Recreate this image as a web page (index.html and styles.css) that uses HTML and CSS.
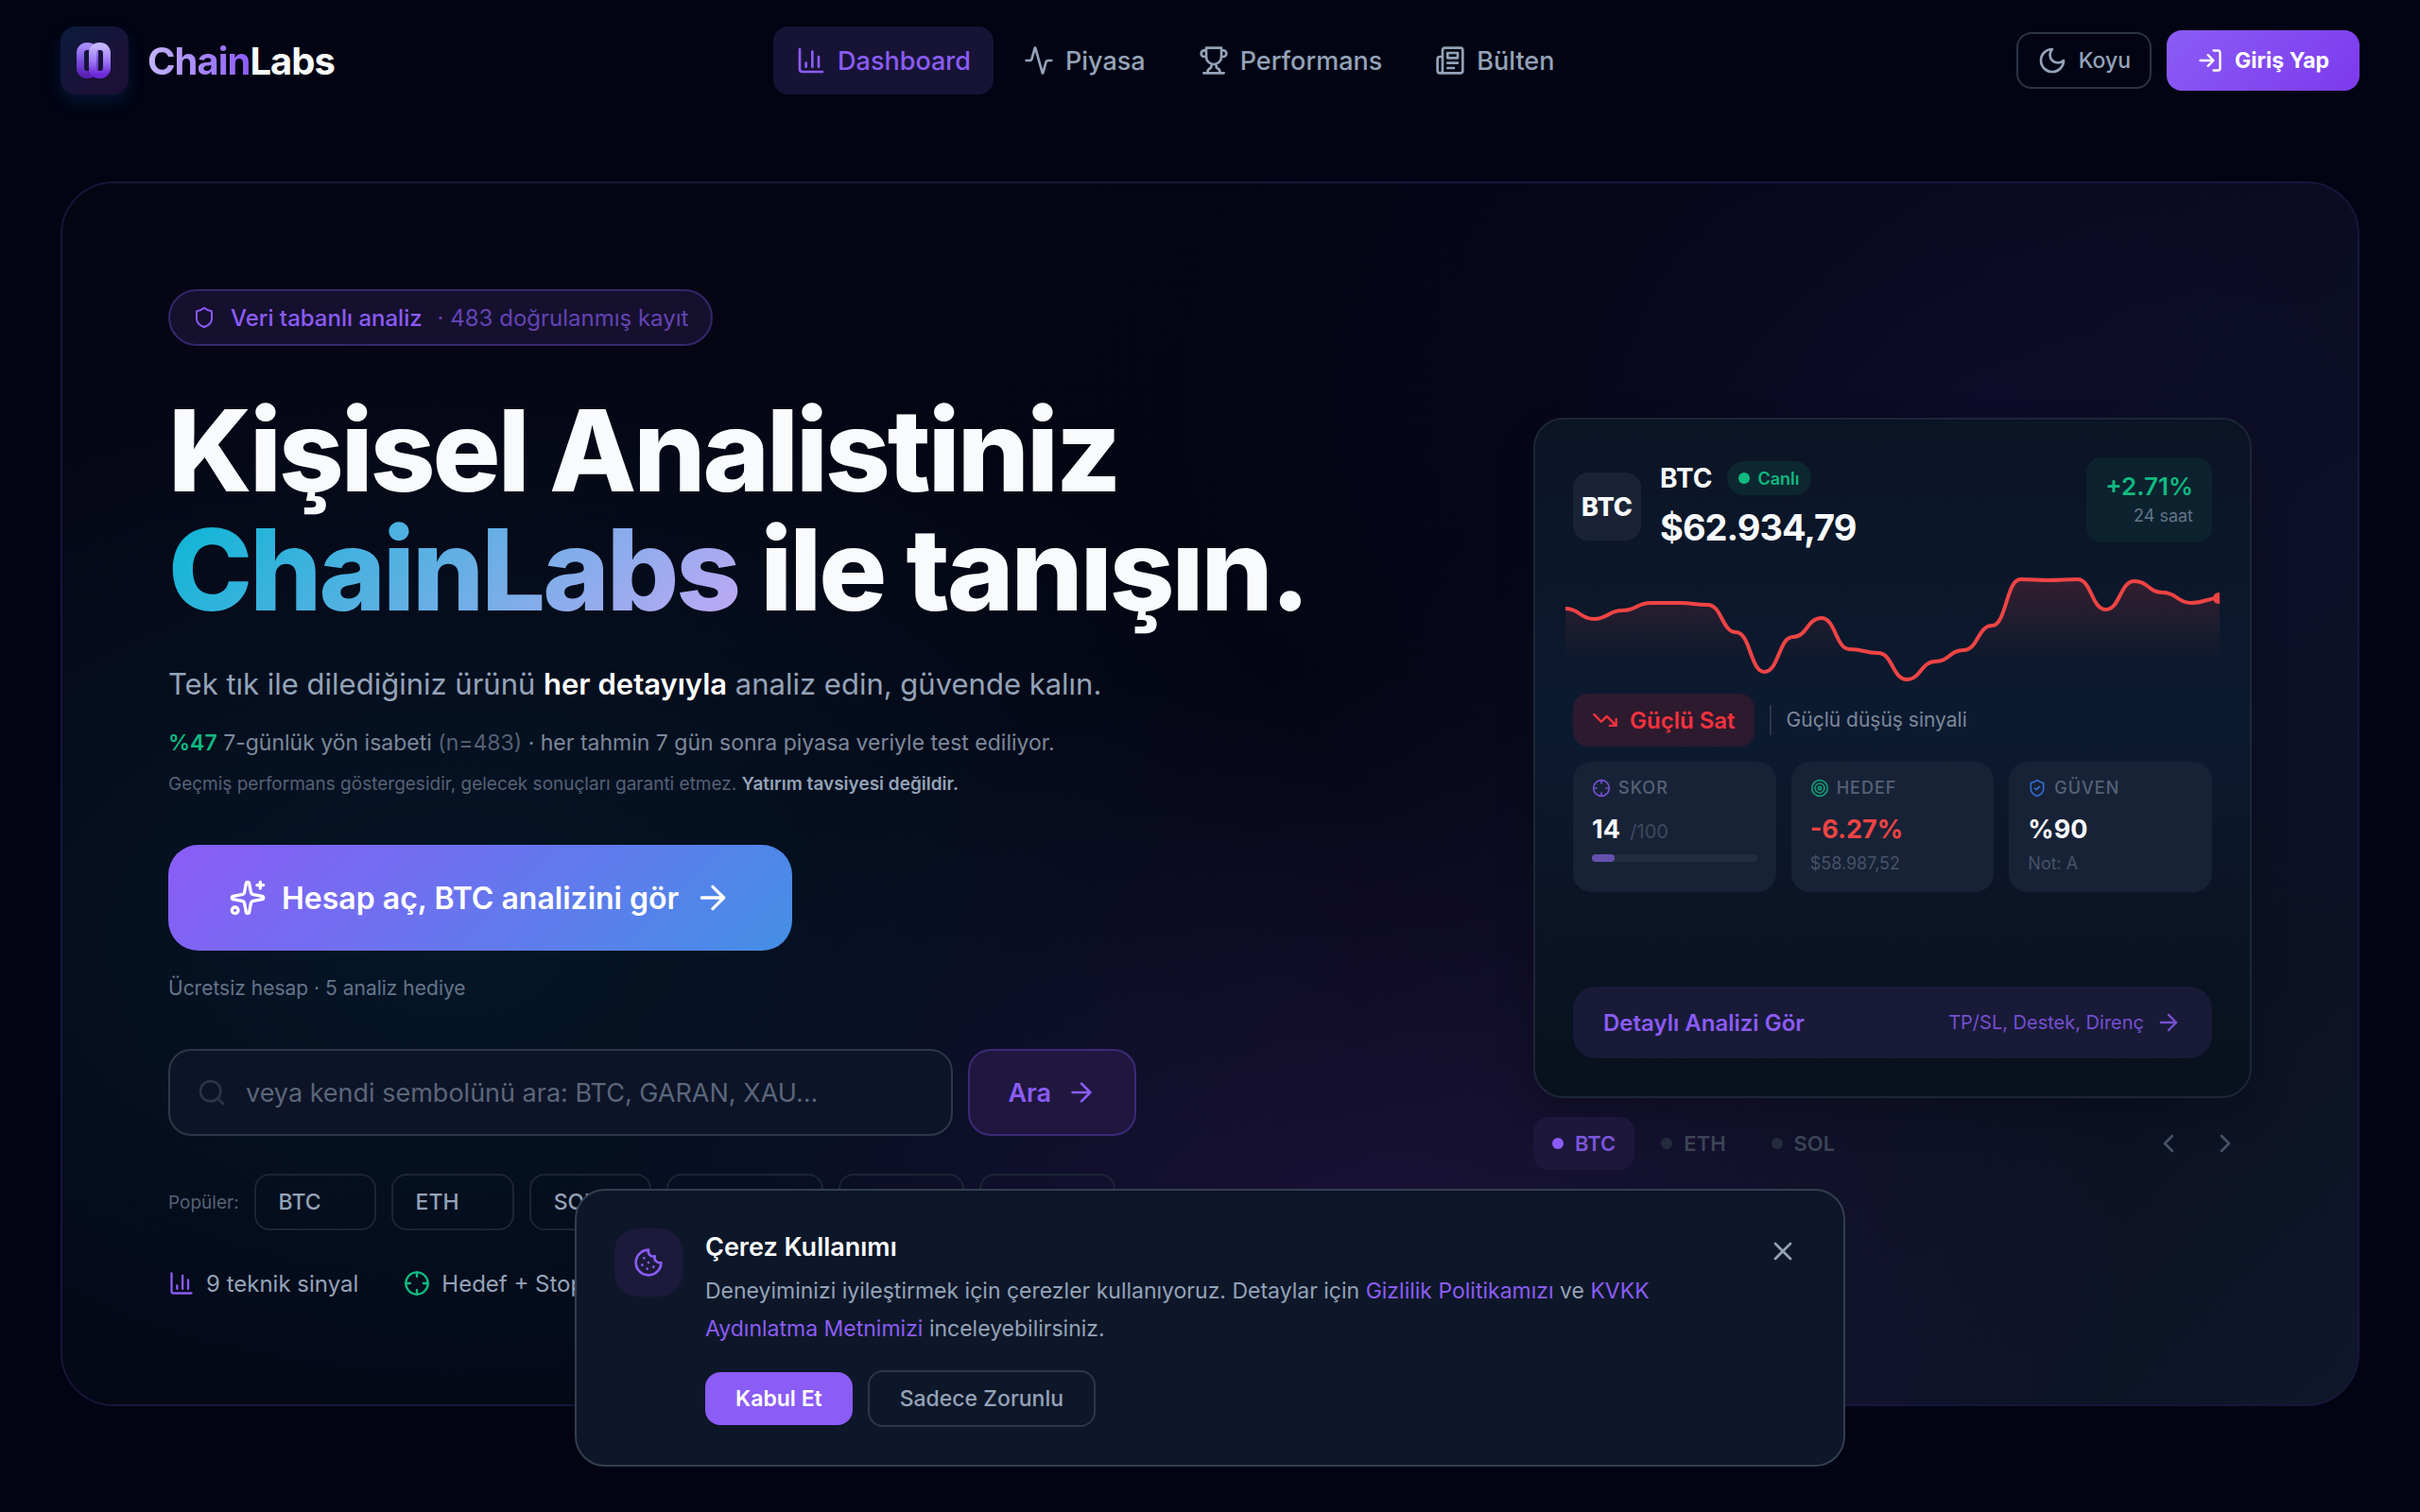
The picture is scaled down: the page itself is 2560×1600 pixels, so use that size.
FILE: index.html
```html
<!DOCTYPE html>
<html lang="tr">
<head>
  <meta charset="UTF-8">
  <meta name="viewport" content="width=device-width, initial-scale=1.0">
  <title>ChainLabs</title>
  <link rel="stylesheet" href="styles.css">
</head>
<body>
  <!-- shared icons -->
  <svg class="sprite" aria-hidden="true">
    <symbol id="i-chart" viewBox="0 0 24 24"><path d="M3 3v16a2 2 0 0 0 2 2h16M18 17V9M13 17V5M8 17v-3"/></symbol>
    <symbol id="i-arrow" viewBox="0 0 24 24"><path d="M5 12h14M12 5l7 7-7 7"/></symbol>
    <symbol id="i-cross" viewBox="0 0 24 24"><circle cx="12" cy="12" r="10"/><path d="M22 12h-4M6 12H2M12 6V2M12 22v-4"/></symbol>
  </svg>

  <header class="header">
    <a href="#" class="brand">
      <span class="brand-logo">
        <svg viewBox="0 0 40 40" fill="none" stroke-width="8">
          <defs>
            <linearGradient id="ringBack" x1="0" y1="0" x2="0" y2="1">
              <stop offset="0" stop-color="#a78bfa"/>
              <stop offset=".5" stop-color="#7c4fe0"/>
              <stop offset="1" stop-color="#5b21b6"/>
            </linearGradient>
            <linearGradient id="ringFront" x1="0" y1="0" x2="0" y2="1">
              <stop offset="0" stop-color="#c4b5fd"/>
              <stop offset=".5" stop-color="#9f7bf7"/>
              <stop offset="1" stop-color="#6d28d9"/>
            </linearGradient>
          </defs>
          <rect x="5" y="5" width="15" height="30" rx="7" stroke="url(#ringBack)"/>
          <rect x="18" y="5" width="15" height="30" rx="7" stroke="url(#ringFront)"/>
        </svg>
      </span>
      <span class="brand-name"><span>Chain</span>Labs</span>
    </a>

    <nav class="nav">
      <a href="#" class="nav-link active"><svg class="icon"><use href="#i-chart"/></svg>Dashboard</a>
      <a href="#" class="nav-link">
        <svg class="icon" viewBox="0 0 24 24"><path d="M22 12h-2.480a2 2 0 0 0-1.930 1.460l-2.350 8.360a.25.25 0 0 1-.48 0L9.240 2.180a.25.25 0 0 0-.48 0l-2.350 8.360A2 2 0 0 1 4.490 12H2"/></svg>Piyasa
      </a>
      <a href="#" class="nav-link">
        <svg class="icon" viewBox="0 0 24 24"><path d="M6 9H4.500a2.500 2.500 0 0 1 0-5H6M18 9h1.500a2.500 2.500 0 0 0 0-5H18M4 22h16M10 14.660V17c0 .55-.47.98-.97 1.210C7.850 18.750 7 20.240 7 22M14 14.660V17c0 .55.47.98.97 1.210C16.150 18.750 17 20.240 17 22M18 2H6v7a6 6 0 0 0 12 0V2Z"/></svg>Performans
      </a>
      <a href="#" class="nav-link">
        <svg class="icon" viewBox="0 0 24 24"><path d="M4 22h16a2 2 0 0 0 2-2V4a2 2 0 0 0-2-2H8a2 2 0 0 0-2 2v16a2 2 0 0 1-2 2Zm0 0a2 2 0 0 1-2-2v-9c0-1.100.9-2 2-2h2M18 14h-8M15 18h-5M10 6h8v4h-8z"/></svg>Bülten
      </a>
    </nav>

    <div class="header-actions">
      <button type="button" class="theme-btn">
        <svg class="icon" viewBox="0 0 24 24"><path d="M12 3a6 6 0 0 0 9 9 9 9 0 1 1-9-9Z"/></svg>Koyu
      </button>
      <button type="button" class="login-btn">
        <svg class="icon" viewBox="0 0 24 24"><path d="M15 3h4a2 2 0 0 1 2 2v14a2 2 0 0 1-2 2h-4M10 17l5-5-5-5M15 12H3"/></svg>Giriş Yap
      </button>
    </div>
  </header>

  <main class="hero">
    <section class="hero-text">
      <div class="badge">
        <svg class="icon" viewBox="0 0 24 24"><path d="M20 13c0 5-3.500 7.500-7.660 8.950a1 1 0 0 1-.67-.01C7.500 20.500 4 18 4 13V6a1 1 0 0 1 1-1c2 0 4.500-1.200 6.240-2.720a1.170 1.170 0 0 1 1.520 0C14.510 3.810 17 5 19 5a1 1 0 0 1 1 1z"/></svg>
        <strong>Veri tabanlı analiz</strong>
        <span>· 483 doğrulanmış kayıt</span>
      </div>

      <h1>Kişisel Analistiniz<br><span>ChainLabs</span> ile tanışın.</h1>

      <p class="lead">Tek tık ile dilediğiniz ürünü <strong>her detayıyla</strong> analiz edin, güvende kalın.</p>
      <p class="accuracy"><strong>%47</strong> 7-günlük yön isabeti <span>(n=483)</span> · her tahmin 7 gün sonra piyasa veriyle test ediliyor.</p>
      <p class="disclaimer">Geçmiş performans göstergesidir, gelecek sonuçları garanti etmez. <strong>Yatırım tavsiyesi değildir.</strong></p>

      <a href="#" class="cta">
        <svg class="icon" viewBox="0 0 24 24"><path d="M11.017 2.814a1 1 0 0 1 1.966 0l1.051 5.558a2 2 0 0 0 1.594 1.594l5.558 1.051a1 1 0 0 1 0 1.966l-5.558 1.051a2 2 0 0 0-1.594 1.594l-1.051 5.558a1 1 0 0 1-1.966 0l-1.051-5.558a2 2 0 0 0-1.594-1.594l-5.558-1.051a1 1 0 0 1 0-1.966l5.558-1.051a2 2 0 0 0 1.594-1.594zM20 2v4M22 4h-4"/><circle cx="4" cy="20" r="2"/></svg>
        Hesap aç, BTC analizini gör
        <svg class="icon arrow"><use href="#i-arrow"/></svg>
      </a>
      <p class="cta-note">Ücretsiz hesap · 5 analiz hediye</p>

      <form class="search">
        <div class="search-field">
          <svg class="icon" viewBox="0 0 24 24"><circle cx="11" cy="11" r="8"/><path d="m21 21-4.340-4.340"/></svg>
          <input type="text" aria-label="Sembol ara" placeholder="veya kendi sembolünü ara: BTC, GARAN, XAU...">
        </div>
        <button type="button" class="search-btn">Ara <svg class="icon"><use href="#i-arrow"/></svg></button>
      </form>

      <div class="popular">
        <span class="popular-label">Popüler:</span>
        <button type="button" class="chip">BTC</button>
        <button type="button" class="chip">ETH</button>
        <button type="button" class="chip">SOL</button>
        <button type="button" class="chip">GARAN</button>
        <button type="button" class="chip">XAU</button>
        <button type="button" class="chip">AAPL</button>
      </div>

      <ul class="features">
        <li><svg class="icon violet"><use href="#i-chart"/></svg>9 teknik sinyal</li>
        <li><svg class="icon green"><use href="#i-cross"/></svg>Hedef + Stop</li>
      </ul>
    </section>

    <section class="hero-preview">
      <article class="coin-card">
        <div class="coin-head">
          <div class="coin-logo">BTC</div>
          <div class="coin-info">
            <div class="coin-name">BTC <span class="live">Canlı</span></div>
            <div class="coin-price">$62.934,79</div>
          </div>
          <div class="change">
            <strong>+2.71%</strong>
            <span>24 saat</span>
          </div>
        </div>

        <svg class="chart" viewBox="0 0 690 128" preserveAspectRatio="none">
          <defs>
            <linearGradient id="chartFill" x1="0" y1="0" x2="0" y2="1">
              <stop offset="0" stop-color="#ef4444" stop-opacity=".18"/>
              <stop offset=".75" stop-color="#ef4444" stop-opacity="0"/>
            </linearGradient>
          </defs>
          <path class="chart-area" d="M0 44C15 44 15 55 30 55S45 46 60 46S75 38 90 38S105 38 120 38S135 40 150 40S165 69 180 69S195 111 210 111S225 74 240 74S255 54 270 54S285 87 300 87S315 91 330 91S345 119 360 119S375 100 390 100S405 88 420 88S435 62 450 62S465 13 480 13S495 14 510 14S525 13 540 13S555 45 570 45S585 15 600 15S615 27 630 27S645 38 660 38S675 33 690 33V128H0Z"/>
          <path class="chart-line" d="M0 44C15 44 15 55 30 55S45 46 60 46S75 38 90 38S105 38 120 38S135 40 150 40S165 69 180 69S195 111 210 111S225 74 240 74S255 54 270 54S285 87 300 87S315 91 330 91S345 119 360 119S375 100 390 100S405 88 420 88S435 62 450 62S465 13 480 13S495 14 510 14S525 13 540 13S555 45 570 45S585 15 600 15S615 27 630 27S645 38 660 38S675 33 690 33"/>
          <circle class="chart-dot" cx="689" cy="33" r="6"/>
        </svg>

        <div class="signal">
          <span class="signal-tag">
            <svg class="icon" viewBox="0 0 24 24"><path d="M16 17h6v-6M22 17l-8.500-8.500-5 5L2 7"/></svg>Güçlü Sat
          </span>
          <span class="signal-text">Güçlü düşüş sinyali</span>
        </div>

        <div class="stats">
          <div class="stat">
            <div class="stat-label"><svg class="icon violet"><use href="#i-cross"/></svg>SKOR</div>
            <div class="stat-value">14 <small>/100</small></div>
            <div class="meter"><div style="width: 14%"></div></div>
          </div>
          <div class="stat">
            <div class="stat-label"><svg class="icon green" viewBox="0 0 24 24"><circle cx="12" cy="12" r="10"/><circle cx="12" cy="12" r="6"/><circle cx="12" cy="12" r="2"/></svg>HEDEF</div>
            <div class="stat-value down">-6.27%</div>
            <div class="stat-sub">$58.987,52</div>
          </div>
          <div class="stat">
            <div class="stat-label"><svg class="icon blue" viewBox="0 0 24 24"><path d="M20 13c0 5-3.500 7.500-7.660 8.950a1 1 0 0 1-.67-.01C7.500 20.500 4 18 4 13V6a1 1 0 0 1 1-1c2 0 4.500-1.200 6.240-2.720a1.170 1.170 0 0 1 1.520 0C14.510 3.810 17 5 19 5a1 1 0 0 1 1 1zM9 12l2 2 4-4"/></svg>GÜVEN</div>
            <div class="stat-value">%90</div>
            <div class="stat-sub">Not: A</div>
          </div>
        </div>

        <a href="#" class="detail-link">
          <strong>Detaylı Analizi Gör</strong>
          <span>TP/SL, Destek, Direnç <svg class="icon"><use href="#i-arrow"/></svg></span>
        </a>
      </article>

      <div class="tabs">
        <button type="button" class="tab active">BTC</button>
        <button type="button" class="tab">ETH</button>
        <button type="button" class="tab">SOL</button>
        <div class="pager">
          <button type="button" aria-label="Önceki"><svg class="icon" viewBox="0 0 24 24"><path d="m15 18-6-6 6-6"/></svg></button>
          <button type="button" aria-label="Sonraki"><svg class="icon" viewBox="0 0 24 24"><path d="m9 18 6-6-6-6"/></svg></button>
        </div>
      </div>
    </section>
  </main>

  <div class="cookie" role="dialog" aria-labelledby="cookie-title">
    <div class="cookie-icon">
      <svg class="icon" viewBox="0 0 24 24"><path d="M12 2a10 10 0 1 0 10 10 4 4 0 0 1-5-5 4 4 0 0 1-5-5M8.500 8.500v.01M16 15.500v.01M12 12v.01M11 17v.01M7 14v.01"/></svg>
    </div>
    <div class="cookie-body">
      <h2 id="cookie-title">Çerez Kullanımı</h2>
      <p>Deneyiminizi iyileştirmek için çerezler kullanıyoruz. Detaylar için <a href="#">Gizlilik Politikamızı</a> ve <a href="#">KVKK Aydınlatma Metnimizi</a> inceleyebilirsiniz.</p>
      <div class="cookie-actions">
        <button type="button" class="accept-btn">Kabul Et</button>
        <button type="button" class="required-btn">Sadece Zorunlu</button>
      </div>
    </div>
    <button type="button" class="close-btn" aria-label="Kapat"><svg class="icon" viewBox="0 0 24 24"><path d="M18 6 6 18M6 6l12 12"/></svg></button>
  </div>
</body>
</html>
```

FILE: styles.css
```css
* {
  box-sizing: border-box;
}

body {
  margin: 0;
  min-height: 100vh;
  background: #020413;
  color: #f8fafc;
  font-family: Inter, "Liberation Sans", sans-serif;
  font-size: 24px;
}

h1, h2, p, ul {
  margin: 0;
  padding: 0;
}

a {
  color: inherit;
  text-decoration: none;
}

button, input {
  font: inherit;
  color: inherit;
  background: none;
  border: none;
  padding: 0;
}

button {
  cursor: pointer;
}

.sprite {
  display: none;
}

.icon {
  width: 32px;
  height: 32px;
  flex-shrink: 0;
  fill: none;
  stroke: currentColor;
  stroke-width: 2;
  stroke-linecap: round;
  stroke-linejoin: round;
}

.violet { color: #8b5cf6; }
.green { color: #10b981; }
.blue { color: #3b82f6; }

/* header */

.header {
  display: flex;
  align-items: center;
  justify-content: space-between;
  padding: 28px 64px;
}

.brand {
  display: flex;
  align-items: center;
  gap: 20px;
}

.brand-logo {
  display: flex;
  align-items: center;
  justify-content: center;
  width: 72px;
  height: 72px;
  border-radius: 16px;
  background: linear-gradient(135deg, #0a1c3c, #1a1238 60%, #1d0f35);
  box-shadow: 0 8px 16px rgba(14, 60, 120, 0.3);
}

.brand-logo svg {
  width: 40px;
  height: 40px;
}

.brand-name {
  font-size: 40px;
  font-weight: 700;
  letter-spacing: -1px;
}

.brand-name span {
  background: linear-gradient(90deg, #c4b5fd, #8b5cf6);
  -webkit-background-clip: text;
  background-clip: text;
  color: transparent;
}

.nav {
  display: flex;
  gap: 8px;
}

.nav-link {
  display: flex;
  align-items: center;
  gap: 12px;
  height: 72px;
  padding: 0 24px;
  border-radius: 16px;
  color: #94a3b8;
  font-size: 27px;
  font-weight: 500;
}

.nav-link.active {
  background: #171335;
  color: #8b5cf6;
}

.header-actions {
  display: flex;
  align-items: center;
  gap: 16px;
}

.theme-btn {
  display: flex;
  align-items: center;
  gap: 12px;
  height: 60px;
  padding: 0 20px;
  border: 2px solid #2c3444;
  border-radius: 16px;
  color: #94a3b8;
  font-size: 23px;
  font-weight: 500;
}

.login-btn {
  display: flex;
  align-items: center;
  gap: 12px;
  height: 64px;
  padding: 0 32px;
  border-radius: 16px;
  background: linear-gradient(135deg, #8b5cf6, #7c3aed);
  color: #fff;
  font-size: 23px;
  font-weight: 700;
}

.login-btn .icon {
  width: 28px;
  height: 28px;
}

/* hero */

.hero {
  display: grid;
  grid-template-columns: minmax(0, 1fr) 760px;
  gap: 96px;
  align-items: center;
  margin: 64px 64px 112px;
  padding: 112px;
  border: 2px solid #17163a;
  border-radius: 56px;
  background:
    radial-gradient(ellipse 40% 50% at 17% 62%, rgba(6, 120, 150, 0.15), transparent),
    radial-gradient(ellipse 34% 48% at 56% 88%, rgba(110, 50, 190, 0.18), transparent),
    radial-gradient(ellipse 36% 50% at 84% 18%, rgba(80, 50, 220, 0.09), transparent),
    linear-gradient(135deg, #060514 0%, #040513 50%, #0f172a 100%);
}

.badge {
  display: inline-flex;
  align-items: center;
  gap: 16px;
  height: 60px;
  padding: 0 24px;
  border: 2px solid #35266b;
  border-radius: 30px;
  background: #16102f;
  color: #8b5cf6;
}

.badge .icon {
  width: 24px;
  height: 24px;
}

.badge strong {
  font-weight: 500;
}

.badge span {
  color: #6344b4;
}

h1 {
  margin-top: 48px;
  font-size: 120px;
  line-height: 126px;
  font-weight: 800;
  letter-spacing: -3px;
}

h1 span {
  background: linear-gradient(135deg, #06b6d4, #c4a8f5);
  -webkit-background-clip: text;
  background-clip: text;
  color: transparent;
}

.lead {
  margin-top: 32px;
  color: #94a3b8;
  font-size: 31px;
  line-height: 52px;
}

.lead strong {
  color: #fff;
  font-weight: 600;
}

.accuracy {
  margin-top: 16px;
  color: #7c889b;
  font-size: 23px;
  line-height: 40px;
}

.accuracy strong {
  color: #10b981;
  font-weight: 600;
}

.accuracy span {
  color: #566176;
}

.disclaimer {
  margin-top: 8px;
  color: #566176;
  font-size: 19px;
  line-height: 32px;
}

.disclaimer strong {
  color: #94a3b8;
  font-weight: 600;
}

.cta {
  display: inline-flex;
  align-items: center;
  gap: 16px;
  height: 112px;
  margin-top: 48px;
  padding: 0 64px;
  border-radius: 32px;
  background: linear-gradient(135deg, #8b5cf6, #448fe6);
  color: #fff;
  font-size: 32px;
  font-weight: 600;
}

.cta .icon {
  width: 40px;
  height: 40px;
}

.cta-note {
  margin-top: 24px;
  color: #64748b;
  font-size: 21px;
  line-height: 32px;
}

.search {
  display: flex;
  gap: 16px;
  max-width: 1024px;
  margin-top: 48px;
}

.search-field {
  display: flex;
  flex: 1;
  align-items: center;
  gap: 20px;
  height: 92px;
  padding: 0 28px;
  border: 2px solid #2d3847;
  border-radius: 24px;
  background: #0d1427;
}

.search-field .icon {
  color: #2c3546;
}

.search-field input {
  flex: 1;
  min-width: 0;
  font-size: 27px;
  outline: none;
}

.search-field input::placeholder {
  color: #5b667a;
  opacity: 1;
}

.search-btn {
  display: flex;
  align-items: center;
  gap: 16px;
  padding: 0 40px;
  border: 2px solid #3c2a77;
  border-radius: 24px;
  background: #20173f;
  color: #8b5cf6;
  font-size: 27px;
  font-weight: 600;
}

.popular {
  display: flex;
  align-items: center;
  gap: 16px;
  margin-top: 40px;
}

.popular-label {
  color: #566176;
  font-size: 19px;
}

.chip {
  height: 60px;
  padding: 0 56px 0 24px;
  border: 2px solid #1c2535;
  border-radius: 16px;
  color: #94a3b8;
  font-size: 23px;
  font-weight: 500;
}

.features {
  display: flex;
  gap: 48px;
  margin-top: 40px;
  list-style: none;
  color: #94a3b8;
}

.features li {
  display: flex;
  align-items: center;
  gap: 12px;
  height: 32px;
}

.features .icon {
  width: 28px;
  height: 28px;
}

/* coin preview */

.coin-card {
  display: flex;
  flex-direction: column;
  min-height: 720px;
  padding: 40px;
  border: 2px solid #1c2637;
  border-radius: 32px;
  background: linear-gradient(180deg, #0b1425 0%, #0c1a30 45%, #0b1424 75%, #08111c 100%);
  box-shadow: 0 16px 40px rgba(0, 0, 0, 0.2);
}

.coin-head {
  display: flex;
  align-items: center;
  gap: 20px;
}

.coin-logo {
  display: flex;
  align-items: center;
  justify-content: center;
  width: 72px;
  height: 72px;
  border-radius: 16px;
  background: #1a2336;
  font-size: 27px;
  font-weight: 800;
}

.coin-name {
  display: flex;
  align-items: center;
  gap: 16px;
  height: 44px;
  font-size: 28px;
  font-weight: 700;
}

.live {
  display: flex;
  align-items: center;
  gap: 8px;
  height: 36px;
  padding: 0 12px;
  border-radius: 18px;
  background: #0c2730;
  color: #10b981;
  font-size: 18px;
  font-weight: 600;
}

.live::before {
  content: "";
  width: 12px;
  height: 12px;
  border-radius: 50%;
  background: currentColor;
}

.coin-price {
  font-size: 38px;
  line-height: 60px;
  font-weight: 700;
  letter-spacing: -1px;
}

.change {
  display: flex;
  flex-direction: column;
  align-self: flex-start;
  align-items: flex-end;
  justify-content: center;
  height: 90px;
  margin-left: auto;
  padding: 0 20px;
  border-radius: 16px;
  background: #0c222e;
}

.change strong {
  color: #10b981;
  font-size: 26px;
  line-height: 34px;
  font-weight: 600;
}

.change span {
  color: #64748b;
  font-size: 18px;
  line-height: 28px;
}

.chart {
  width: calc(100% + 16px);
  height: 128px;
  margin: 12px -8px 6px;
  overflow: hidden;
}

.chart-area {
  fill: url(#chartFill);
}

.chart-line {
  fill: none;
  stroke: #ef4444;
  stroke-width: 4;
}

.chart-dot {
  fill: #ef4444;
}

.signal {
  display: flex;
  align-items: center;
  gap: 16px;
}

.signal-tag {
  display: flex;
  align-items: center;
  gap: 12px;
  height: 56px;
  padding: 0 20px;
  border-radius: 16px;
  background: #2d1a2e;
  color: #f5323e;
  font-weight: 600;
}

.signal-tag .icon {
  width: 28px;
  height: 28px;
}

.signal-text {
  padding-left: 16px;
  border-left: 2px solid #2b3648;
  color: #7c889b;
  font-size: 21px;
  line-height: 32px;
}

.stats {
  display: grid;
  grid-template-columns: repeat(3, 1fr);
  gap: 16px;
  margin-top: 16px;
}

.stat {
  height: 138px;
  padding: 16px 20px;
  border-radius: 20px;
  background: #172237;
}

.stat-label {
  display: flex;
  align-items: center;
  gap: 8px;
  color: #566176;
  font-size: 18px;
  line-height: 24px;
  font-weight: 500;
  letter-spacing: 1px;
}

.stat-label .icon {
  width: 20px;
  height: 20px;
  opacity: 0.8;
}

.stat-value {
  margin-top: 12px;
  font-size: 27px;
  line-height: 40px;
  font-weight: 700;
}

.stat-value small {
  margin-left: 4px;
  color: #3f4a5d;
  font-size: 20px;
  font-weight: 400;
}

.stat-value.down {
  color: #ef4444;
}

.stat-sub {
  margin-top: 4px;
  color: #475266;
  font-size: 18px;
  line-height: 24px;
}

.meter {
  height: 8px;
  margin-top: 4px;
  border-radius: 4px;
  background: #222d3d;
}

.meter div {
  height: 100%;
  border-radius: 4px;
  background: #6650ac;
}

.detail-link {
  display: flex;
  align-items: center;
  justify-content: space-between;
  height: 76px;
  margin-top: auto;
  padding: 0 32px;
  border-radius: 24px;
  background: #191a38;
  color: #8b5cf6;
}

.detail-link strong {
  font-weight: 600;
}

.detail-link span {
  display: flex;
  align-items: center;
  gap: 12px;
  color: #7450cf;
  font-size: 20px;
}

.detail-link .icon {
  width: 28px;
  height: 28px;
}

.tabs {
  display: flex;
  align-items: center;
  gap: 8px;
  margin-top: 20px;
}

.tab {
  display: flex;
  align-items: center;
  gap: 12px;
  height: 56px;
  padding: 0 20px;
  border-radius: 16px;
  color: #3b4456;
  font-size: 22px;
  font-weight: 600;
}

.tab::before {
  content: "";
  width: 12px;
  height: 12px;
  border-radius: 50%;
  background: #232b3c;
}

.tab.active {
  background: #1c173b;
  color: #7c55dc;
}

.tab.active::before {
  background: #8b5cf6;
}

.pager {
  display: flex;
  gap: 4px;
  margin-left: auto;
}

.pager button {
  display: flex;
  padding: 12px;
  color: #475266;
}

/* cookie notice */

.cookie {
  position: fixed;
  left: 0;
  right: 0;
  bottom: 48px;
  display: flex;
  align-items: flex-start;
  gap: 24px;
  max-width: 1344px;
  margin: 0 auto;
  padding: 40px;
  border: 2px solid #333e4f;
  border-radius: 32px;
  background: #0e1729;
}

.cookie-icon {
  display: flex;
  padding: 20px;
  border-radius: 24px;
  background: #1b1a3a;
  color: #8b5cf6;
}

.cookie-body {
  flex: 1;
}

.cookie-body h2 {
  font-size: 27px;
  line-height: 40px;
  font-weight: 600;
}

.cookie-body p {
  margin-top: 6px;
  color: #94a3b8;
  font-size: 23px;
  line-height: 40px;
}

.cookie-body a {
  color: #8b5cf6;
}

.cookie-actions {
  display: flex;
  align-items: center;
  gap: 16px;
  margin-top: 24px;
}

.accept-btn {
  height: 56px;
  padding: 0 32px;
  border-radius: 16px;
  background: #8b5cf6;
  color: #fff;
  font-size: 23px;
  font-weight: 600;
}

.required-btn {
  height: 60px;
  padding: 0 32px;
  border: 2px solid #2c3748;
  border-radius: 16px;
  color: #94a3b8;
  font-size: 23px;
  font-weight: 500;
}

.close-btn {
  display: flex;
  padding: 8px;
  color: #94a3b8;
}
```
